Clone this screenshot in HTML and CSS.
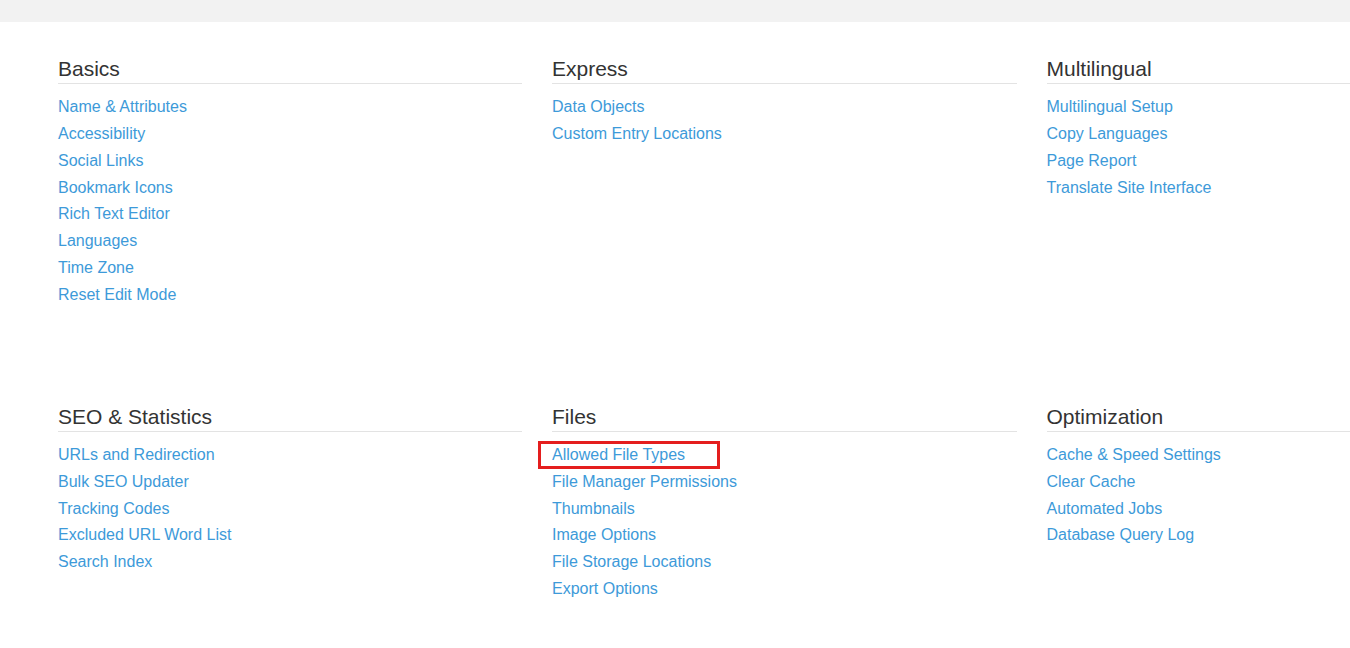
FILE: index.html
```html
<!DOCTYPE html>
<html lang="en">
<head>
<meta charset="utf-8">
<title>System &amp; Settings</title>
<link rel="stylesheet" href="styles.css">
</head>
<body>
<div class="topbar"></div>
<div class="viewport">
  <div class="grid">
    <section class="group">
      <h3 class="group-title">Basics</h3>
      <ul class="links">
        <li><a href="#">Name &amp; Attributes</a></li>
        <li><a href="#">Accessibility</a></li>
        <li><a href="#">Social Links</a></li>
        <li><a href="#">Bookmark Icons</a></li>
        <li><a href="#">Rich Text Editor</a></li>
        <li><a href="#">Languages</a></li>
        <li><a href="#">Time Zone</a></li>
        <li><a href="#">Reset Edit Mode</a></li>
      </ul>
    </section>
    <section class="group">
      <h3 class="group-title">Express</h3>
      <ul class="links">
        <li><a href="#">Data Objects</a></li>
        <li><a href="#">Custom Entry Locations</a></li>
      </ul>
    </section>
    <section class="group">
      <h3 class="group-title">Multilingual</h3>
      <ul class="links">
        <li><a href="#">Multilingual Setup</a></li>
        <li><a href="#">Copy Languages</a></li>
        <li><a href="#">Page Report</a></li>
        <li><a href="#">Translate Site Interface</a></li>
      </ul>
    </section>
    <section class="group">
      <h3 class="group-title">SEO &amp; Statistics</h3>
      <ul class="links">
        <li><a href="#">URLs and Redirection</a></li>
        <li><a href="#">Bulk SEO Updater</a></li>
        <li><a href="#">Tracking Codes</a></li>
        <li><a href="#">Excluded URL Word List</a></li>
        <li><a href="#">Search Index</a></li>
      </ul>
    </section>
    <section class="group">
      <h3 class="group-title">Files</h3>
      <ul class="links">
        <li class="highlighted"><a href="#">Allowed File Types</a></li>
        <li><a href="#">File Manager Permissions</a></li>
        <li><a href="#">Thumbnails</a></li>
        <li><a href="#">Image Options</a></li>
        <li><a href="#">File Storage Locations</a></li>
        <li><a href="#">Export Options</a></li>
      </ul>
    </section>
    <section class="group">
      <h3 class="group-title">Optimization</h3>
      <ul class="links">
        <li><a href="#">Cache &amp; Speed Settings</a></li>
        <li><a href="#">Clear Cache</a></li>
        <li><a href="#">Automated Jobs</a></li>
        <li><a href="#">Database Query Log</a></li>
      </ul>
    </section>
  </div>
</div>
</body>
</html>
```

FILE: styles.css
```css
html, body {
  margin: 0;
  padding: 0;
  background: #ffffff;
  font-family: "Liberation Sans", Arial, Helvetica, sans-serif;
  overflow: hidden;
}

.topbar {
  height: 22px;
  background: #f2f2f2;
}

.viewport {
  width: 1350px;
  overflow: hidden;
}

.grid {
  display: grid;
  grid-template-columns: 464px 464.5px 464px;
  column-gap: 30px;
  row-gap: 95px;
  padding: 36px 0 0 58px;
  width: max-content;
  align-items: start;
}

.group-title {
  margin: 0 0 12px 0;
  padding: 0 0 3px 0;
  font-size: 21px;
  line-height: 22px;
  font-weight: normal;
  color: #333333;
  border-bottom: 1px solid #e3e3e3;
}

.links {
  list-style: none;
  margin: 0;
  padding: 0;
}

.links li {
  font-size: 16px;
  line-height: 22.857px;
  margin-bottom: 4px;
}

.links a {
  color: #3d9ad9;
  text-decoration: none;
}

.highlighted {
  position: relative;
}

.highlighted::after {
  content: "";
  position: absolute;
  left: -14px;
  top: -3px;
  width: 176px;
  height: 22px;
  border: 3px solid #e41e1e;
}
```
